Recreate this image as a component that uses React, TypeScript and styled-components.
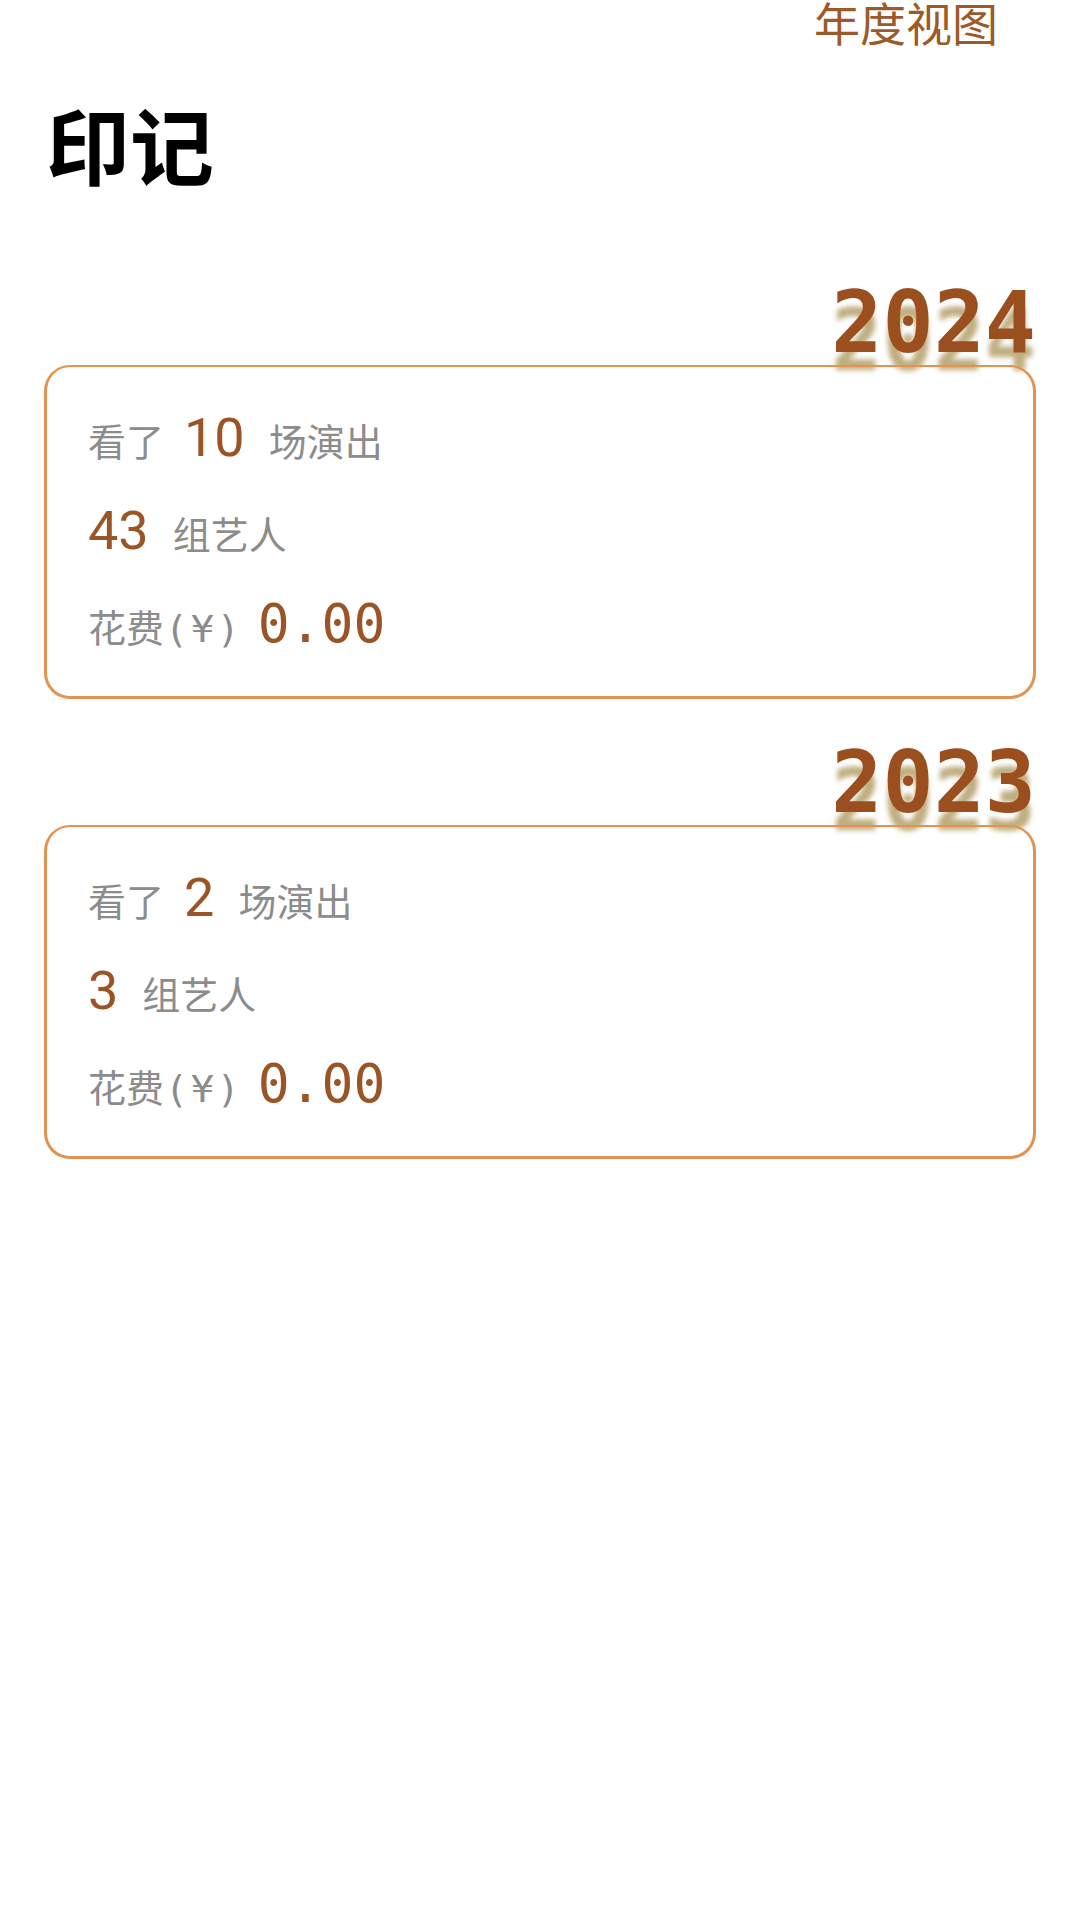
import styled, { createGlobalStyle } from "styled-components";

interface YearStat {
  year: number;
  shows: number;
  artists: number;
  spent: string;
}

const stats: YearStat[] = [
  { year: 2024, shows: 10, artists: 43, spent: "0.00" },
  { year: 2023, shows: 2, artists: 3, spent: "0.00" },
];

const GlobalStyle = createGlobalStyle`
  body {
    margin: 0;
    background: #ffffff;
    font-family: "Noto Sans CJK SC", "Noto Sans", sans-serif;
  }
`;

const App = () => {
  return (
    <Page>
      <GlobalStyle />
      <Header>
        <YearViewLink>年度视图</YearViewLink>
      </Header>
      <Title>印记</Title>
      <YearList>
        {stats.map((s) => (
          <YearSection key={s.year}>
            <YearLabel>{s.year}</YearLabel>
            <Card>
              <Row>
                <Label>看了</Label>
                <Count>{s.shows}</Count>
                <Label>场演出</Label>
              </Row>
              <Row>
                <Count $first>{s.artists}</Count>
                <Label>组艺人</Label>
              </Row>
              <Row>
                <Label>
                  花费<Paren>(¥)</Paren>
                </Label>
                <Money>{s.spent}</Money>
              </Row>
            </Card>
          </YearSection>
        ))}
      </YearList>
    </Page>
  );
};

export default App;

const Page = styled.div`
  width: 1080px;
  min-height: 1920px;
  background: #ffffff;
`;

const Header = styled.div`
  display: flex;
  justify-content: flex-end;
  padding-right: 82px;
`;

const YearViewLink = styled.span`
  font-size: 46px;
  line-height: 42px;
  color: #9c5a2a;
  cursor: pointer;
`;

const Title = styled.h1`
  margin: 59px 0 0;
  padding-left: 46px;
  font-size: 84px;
  line-height: 84px;
  font-weight: 700;
  color: #000000;
`;

const YearList = styled.div`
  display: flex;
  flex-direction: column;
  gap: 41px;
  padding: 95px 44px 0;
`;

const YearSection = styled.section`
  display: flex;
  flex-direction: column;
`;

const YearLabel = styled.div`
  text-align: right;
  font-family: "DejaVu Sans Mono", monospace;
  font-weight: 700;
  font-size: 85px;
  line-height: 85px;
  color: #9b4f1f;
  text-shadow: 0 18px 5px rgba(150, 120, 45, 0.6);
`;

const Card = styled.div`
  display: flex;
  flex-direction: column;
  gap: 31px;
  padding: 41px 41px 37px;
  border: 3px solid #e3934f;
  border-top-width: 2px;
  border-radius: 26px;
`;

const Row = styled.div`
  display: flex;
  align-items: baseline;
  min-height: 60px;
`;

const Label = styled.span`
  font-size: 38px;
  line-height: 60px;
  color: #8c8c8c;
`;

const Paren = styled.span`
  font-family: "DejaVu Sans Mono", monospace;
  letter-spacing: 3px;
  padding-left: 1px;
`;

const Count = styled.span<{ $first?: boolean }>`
  font-family: Roboto, "Noto Sans", sans-serif;
  font-size: 54px;
  line-height: 60px;
  color: #9a5425;
  margin: 0 24px 0 ${(p) => (p.$first ? "0" : "20px")};
`;

const Money = styled.span`
  font-family: "DejaVu Sans Mono", monospace;
  font-size: 53px;
  line-height: 60px;
  color: #9a5425;
  margin-left: 15px;
`;
